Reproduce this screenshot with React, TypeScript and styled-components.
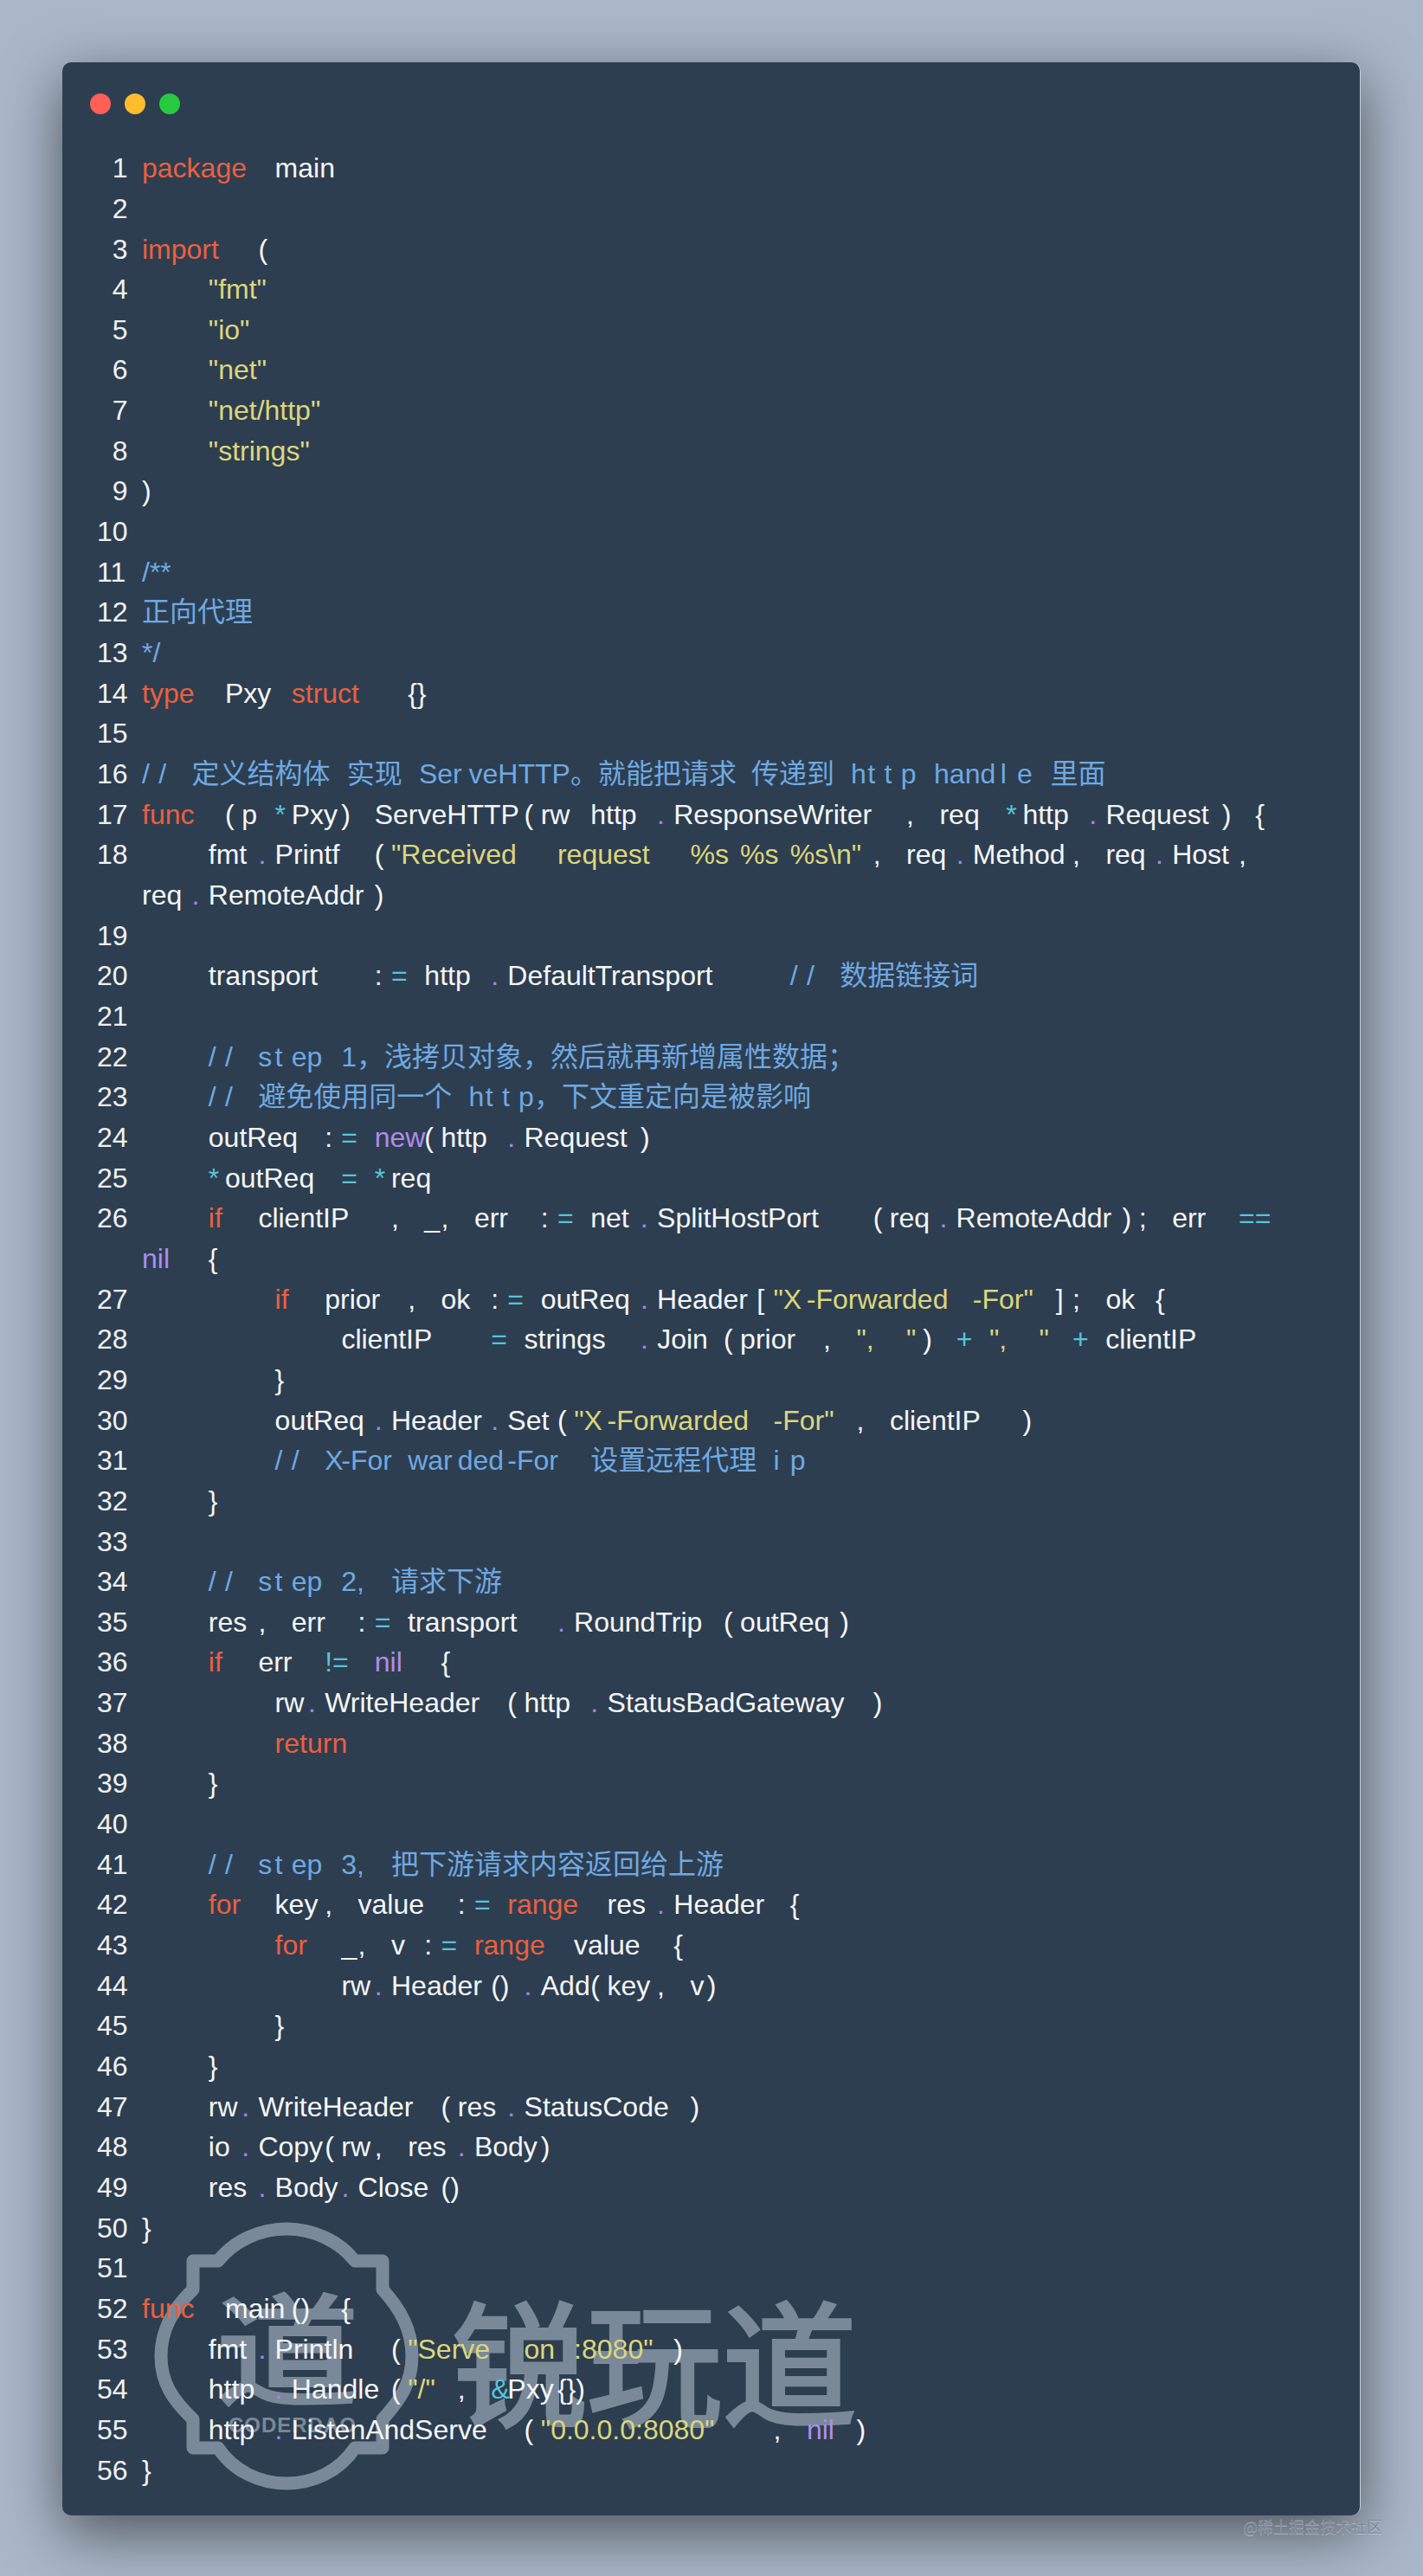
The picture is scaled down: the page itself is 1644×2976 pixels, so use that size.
import React from 'react'
import styled, { createGlobalStyle } from 'styled-components'

const CELL = 19.2
const CJK_CELL = 32

const source = `package main

import (
    "fmt"
    "io"
    "net"
    "net/http"
    "strings"
)

/**
正向代理
*/
type Pxy struct {}

/|/ 定义结构体 实现 Ser|veHTTP。就能把请求 传递到 h|t|t|p hand|l|e 里面
func (p *Pxy) ServeHTTP(rw http.ResponseWriter, req *http.Request) {
    fmt.Printf("Received request %s %s %s\\n", req.Method, req.Host, req.RemoteAddr)

    transport := http.DefaultTransport /|/ 数据链接词

    /|/ s|t|ep 1，浅拷贝对象，然后就再新增属性数据；
    /|/ 避免使用同一个 h|t|t|p，下文重定向是被影响
    outReq := new(http.Request)
    *outReq = *req
    if clientIP, _, err := net.SplitHostPort(req.RemoteAddr); err == nil {
        if prior, ok := outReq.Header["X-Forwarded-For"]; ok {
            clientIP = strings.Join(prior, ", ") + ", " + clientIP
        }
        outReq.Header.Set("X-Forwarded-For", clientIP)
        /|/ X|-For|war|ded|-For 设置远程代理 i|p
    }

    /|/ s|t|ep 2, 请求下游
    res, err := transport.RoundTrip(outReq)
    if err != nil {
        rw.WriteHeader(http.StatusBadGateway)
        return
    }

    /|/ s|t|ep 3, 把下游请求内容返回给上游
    for key, value := range res.Header {
        for _, v := range value {
            rw.Header().Add(key, v)
        }
    }
    rw.WriteHeader(res.StatusCode)
    io.Copy(rw, res.Body)
    res.Body.Close()
}

func main() {
    fmt.Println("Serve on :8080")
    http.Handle("/", &Pxy{})
    http.ListenAndServe("0.0.0.0:8080", nil)
}`

type Kind = 'plain' | 'keyword' | 'string' | 'comment' | 'operator' | 'dot' | 'literal'

const colors: Record<Kind, string> = {
  plain: '#f4f6f8',
  keyword: '#ea6040',
  string: '#dcd67c',
  comment: '#6fa9e2',
  operator: '#56c5d8',
  dot: '#a684e6',
  literal: '#b08cec',
}

const KEYWORDS = ['package', 'import', 'type', 'struct', 'func', 'if', 'for', 'range', 'return']
const LITERALS = ['nil', 'new']
const OPERATORS = ['=', '==', '!=', '*', '&', '+']
const BLOCK_COMMENT = [11, 12, 13]

type Piece = { text: string; kind: Kind }

const classify = (text: string): Kind => {
  if (KEYWORDS.includes(text)) return 'keyword'
  if (LITERALS.includes(text)) return 'literal'
  if (OPERATORS.includes(text)) return 'operator'
  if (text === '.') return 'dot'
  return 'plain'
}

const tokenize = (line: string, lineNo: number): Piece[] => {
  const splitComment = (text: string): Piece[] =>
    (text.match(/\s+|[^\s|]+/g) || []).map((t) => ({ text: t, kind: 'comment' as Kind }))

  if (BLOCK_COMMENT.includes(lineNo)) return splitComment(line)

  const at = line.indexOf('/|/')
  const code = at >= 0 ? line.slice(0, at) : line
  const out: Piece[] = []
  const parts = code.match(/"[^"]*"|[A-Za-z0-9_]+|==|!=|\(\)|\{\}\)?|\s+|./g) || []
  parts.forEach((part) => {
    if (part.startsWith('"')) {
      (part.match(/\s+|-?[^\s-]+/g) || []).forEach((t) => out.push({ text: t, kind: 'string' }))
    } else {
      out.push({ text: part, kind: classify(part) })
    }
  })
  return at >= 0 ? out.concat(splitComment(line.slice(at))) : out
}

const widthOf = (text: string) =>
  Array.from(text).reduce((sum, ch) => sum + (ch.charCodeAt(0) > 0x2e80 ? CJK_CELL : CELL), 0)

const GlobalStyle = createGlobalStyle`
  html, body {
    margin: 0;
    padding: 0;
    background: #aab7c8;
  }
`

const Page = styled.div`
  position: relative;
  box-sizing: border-box;
  width: 1644px;
  height: 2976px;
  padding: 72px;
  background: #aab7c8;
  font-family: 'Liberation Sans', 'Noto Sans CJK SC', sans-serif;
`

const Window = styled.div`
  position: relative;
  box-sizing: border-box;
  width: 1500px;
  height: 2834px;
  padding: 36px 72px 30px 40px;
  background: #2d3e50;
  border-radius: 10px;
  border-right: 1px solid #c3cedc;
  box-shadow: 0 20px 68px rgba(0, 0, 0, 0.55);
`

const TitleBar = styled.div`
  display: flex;
  gap: 16px;
  margin-left: -8px;
  margin-bottom: 39.2px;
`

const Light = styled.span<{ $color: string }>`
  width: 24px;
  height: 24px;
  border-radius: 50%;
  background: ${(p) => p.$color};
`

const Code = styled.div`
  position: relative;
  z-index: 1;
  font-size: 32px;
  line-height: 46.65px;
  color: ${colors.plain};
`

const Row = styled.div`
  display: flex;
`

const LineNo = styled.div<{ $single: boolean }>`
  flex: 0 0 52px;
  box-sizing: border-box;
  padding-left: ${(p) => (p.$single ? CELL - 1.5 : 0)}px;
  color: #eef1f4;
`

const Source = styled.div`
  flex: 1;
  min-width: 0;
  min-height: 46.65px;
`

const Token = styled.span<{ $kind: Kind; $width: number }>`
  display: inline-block;
  width: ${(p) => p.$width}px;
  white-space: pre;
  color: ${(p) => colors[p.$kind]};
`

const Watermark = styled.div`
  position: absolute;
  left: 106px;
  top: 2495px;
  display: flex;
  align-items: center;
  gap: 38px;
  color: #7a8999;
  font-family: 'Noto Sans CJK SC', sans-serif;
  font-weight: 400;
`

const Badge = styled.div`
  position: relative;
  width: 306px;
  height: 310px;
`

const BadgeGlyph = styled.span`
  position: absolute;
  left: 84px;
  top: 70px;
  font-size: 140px;
  line-height: 140px;
  transform: scaleX(1.18);
  -webkit-text-stroke: 4px #7a8999;
`

const BadgeCaption = styled.span`
  position: absolute;
  left: 86px;
  top: 223px;
  font-family: 'Liberation Sans', sans-serif;
  font-weight: 700;
  font-size: 24px;
  line-height: 24px;
  letter-spacing: 1px;
`

const BigName = styled.div`
  font-size: 156px;
  line-height: 156px;
  margin-top: 2px;
  white-space: nowrap;
  -webkit-text-stroke: 4px #7a8999;
`

const Credit = styled.div`
  position: absolute;
  right: 47px;
  bottom: 46px;
  font-family: 'Noto Sans CJK SC', sans-serif;
  font-size: 18px;
  line-height: 24px;
  color: #7f8b9a;
  text-shadow: 0 1px 0 rgba(255, 255, 255, 0.35);
`

const BadgeOutline = () => (
  <svg width="306" height="310" viewBox="0 0 306 310" fill="none">
    <path
      d="M74 45 C92 22 122 8 153 8 C184 8 214 22 232 45 L264 45 L264 78 C284 100 298 124 298 155 C298 186 284 206 264 228 L264 261 L232 261 C214 288 184 302 153 302 C122 302 92 288 74 261 L45 261 L45 228 C22 206 8 186 8 155 C8 124 22 100 45 78 L45 45 Z"
      stroke="#7a8999"
      strokeWidth="15"
      strokeLinejoin="round"
    />
  </svg>
)

const App = () => {
  const lines = source.split('\n')
  return (
    <Page>
      <GlobalStyle />
      <Window>
        <TitleBar>
          <Light $color="#ff5f56" />
          <Light $color="#ffbd2e" />
          <Light $color="#27c93f" />
        </TitleBar>
        <Watermark>
          <Badge>
            <BadgeOutline />
            <BadgeGlyph>道</BadgeGlyph>
            <BadgeCaption>CODERDAO</BadgeCaption>
          </Badge>
          <BigName>锐玩道</BigName>
        </Watermark>
        <Code>
          {lines.map((line, i) => (
            <Row key={i}>
              <LineNo $single={i < 9}>{i + 1}</LineNo>
              <Source>
                {tokenize(line, i + 1).map((t, j) => (
                  <Token key={j} $kind={t.kind} $width={widthOf(t.text)}>
                    {t.text}
                  </Token>
                ))}
              </Source>
            </Row>
          ))}
        </Code>
      </Window>
      <Credit>@稀土掘金技术社区</Credit>
    </Page>
  )
}

export default App
